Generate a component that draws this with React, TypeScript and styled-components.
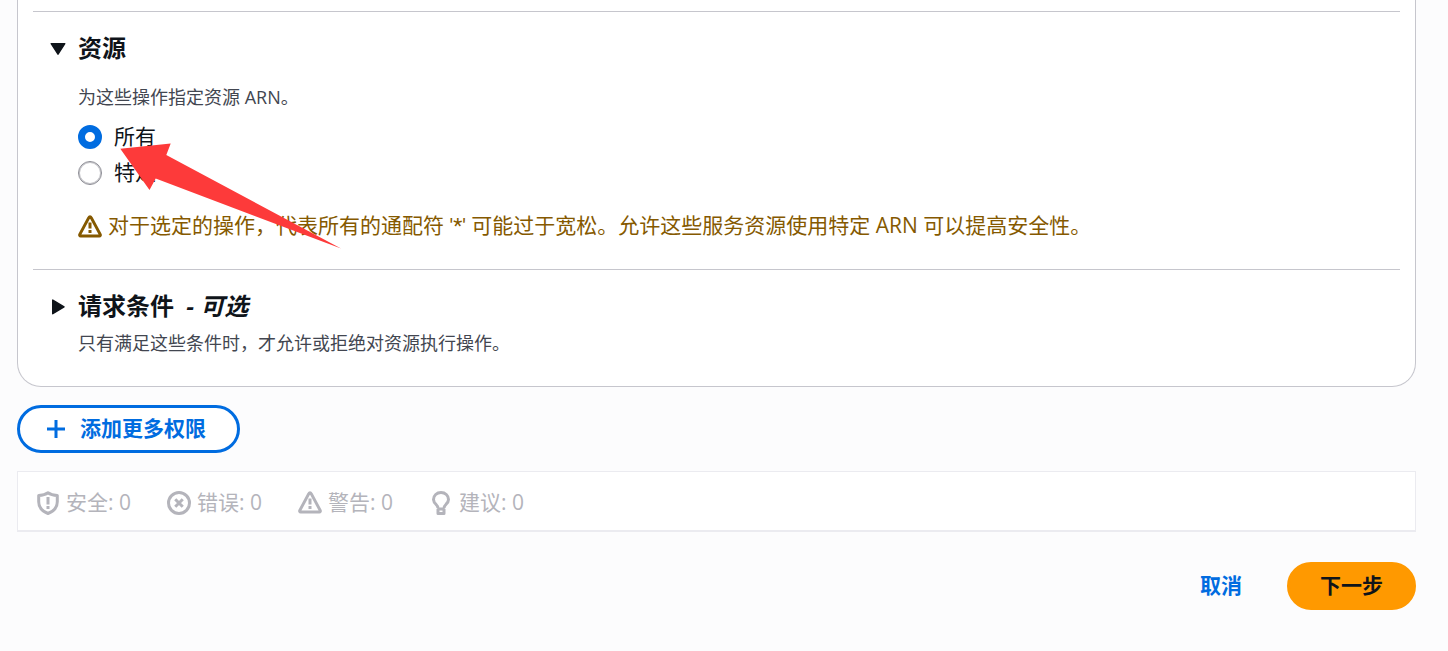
import React, { useState } from "react";
import styled, { createGlobalStyle } from "styled-components";

const GlobalStyle = createGlobalStyle`
  *, *::before, *::after { box-sizing: border-box; }
  html { background: #fcfcfd; }
  body {
    margin: 0;
    color: #0f141a;
    font-family: "Open Sans", "Noto Sans CJK SC", sans-serif;
    font-size: 21px;
    line-height: 30px;
  }
  button, input { font: inherit; margin: 0; }
`;

const Page = styled.main`
  position: relative;
  display: flex;
  flex-direction: column;
  gap: 18px;
  padding: 0 32px 40px 17px;
`;

const Card = styled.section`
  padding: 11px 15px 0;
  background: #ffffff;
  border: 1px solid #c6c6cd;
  border-top: 0;
  border-radius: 0 0 24px 24px;
`;

const Section = styled.div<{ $bottom: number }>`
  padding: 21px 13px ${(p) => p.$bottom}px;
  border-top: 1px solid #c6c6cd;
`;

const SectionToggle = styled.button`
  display: flex;
  align-items: center;
  gap: 8px;
  padding: 0;
  border: 0;
  background: none;
  color: inherit;
  cursor: pointer;
`;

const Heading = styled.span`
  font-size: 24px;
  line-height: 30px;
  font-weight: 700;

  em { margin-left: 6px; }
`;

const SectionBody = styled.div`
  padding-left: 32px;
`;

const Description = styled.p<{ $top: number }>`
  margin: ${(p) => p.$top}px 0 0;
  color: #424650;
  font-size: 18px;
  line-height: 24px;
`;

const RadioGroup = styled.fieldset`
  display: flex;
  flex-direction: column;
  gap: 6px;
  margin: 13px 0 0;
  padding: 0;
  border: 0;
`;

const RadioLabel = styled.label`
  display: flex;
  align-items: center;
  gap: 12px;
  align-self: flex-start;
`;

const RowText = styled.span`
  display: block;
  padding-bottom: 2px;
  line-height: 28px;
`;

const Wildcard = styled.span`
  font-family: Roboto, "Liberation Sans", sans-serif;
`;

const Radio = styled.input`
  appearance: none;
  width: 24px;
  height: 24px;
  border: 1px solid #8c8c94;
  border-radius: 50%;
  background: #ffffff;
  box-shadow: inset 0 0 0 1px #c6c6ca;

  &:checked {
    border: 7px solid #006ce0;
    box-shadow: none;
  }
`;

const Warning = styled.p`
  display: flex;
  align-items: center;
  gap: 6px;
  margin: 23px 0 0;
  color: #855900;
`;

const Button = styled.button<{ $variant: "outline" | "link" | "primary" }>`
  display: inline-flex;
  align-items: center;
  gap: 12px;
  height: 48px;
  padding: ${(p) => (p.$variant === "outline" ? "0 31px 0 24px" : "0 30px")};
  border: 3px solid
    ${(p) => ({ outline: "#006ce0", link: "transparent", primary: "#ff9900" })[p.$variant]};
  border-radius: 24px;
  background: ${(p) => ({ outline: "#ffffff", link: "transparent", primary: "#ff9900" })[p.$variant]};
  color: ${(p) => (p.$variant === "primary" ? "#0f141a" : "#006ce0")};
  font-weight: 700;
  cursor: pointer;
`;

const AddRow = styled.div`
  display: flex;
`;

const StatusBar = styled.ul`
  display: flex;
  gap: 36px;
  margin: 0;
  padding: 16px 18px 12px;
  list-style: none;
  background: #ffffff;
  border: 1px solid #ebebf0;
  border-bottom-width: 2px;
  color: #b4b4bb;
`;

const StatusItem = styled.li`
  display: flex;
  align-items: center;
  gap: 6px;
`;

const Footer = styled.footer`
  display: flex;
  justify-content: flex-end;
  gap: 12px;
  padding-top: 12px;
`;

const Glyph = styled.svg`
  flex: none;
  width: 24px;
  height: 24px;
  fill: none;
  stroke: currentColor;
  stroke-width: 2;
  stroke-linejoin: round;
`;

const Arrow = styled.svg`
  position: absolute;
  left: 120px;
  top: 143px;
  width: 222px;
  height: 106px;
  pointer-events: none;
`;

const Caret = ({ open }: { open: boolean }) => (
  <Glyph viewBox="0 0 16 16" aria-hidden="true">
    <path
      fill="currentColor"
      strokeWidth="1"
      d={open ? "M3.5 5.1h9L8 12.1z" : "M4.5 4.1v9L12 8.6z"}
    />
  </Glyph>
);

const WarningIcon = () => (
  <Glyph viewBox="0 0 16 16" aria-hidden="true">
    <path d="M7.3 1.6 1.2 12.9c-.3.6 0 1.1.6 1.1h12.4c.6 0 .9-.5.6-1.1L8.7 1.6c-.3-.6-1.1-.6-1.4 0z" />
    <path d="M8 5v4M8 10v2" />
  </Glyph>
);

const ShieldIcon = () => (
  <Glyph viewBox="0 0 16 16" aria-hidden="true">
    <path d="M8 1.2C6.5 2.3 4.2 2.9 1.8 3v4.2C1.8 10.8 4 13.5 8 15c4-1.5 6.2-4.2 6.2-7.8V3C11.8 2.9 9.5 2.3 8 1.2z" />
    <path d="M8 4v5M8 10v2" />
  </Glyph>
);

const ErrorIcon = () => (
  <Glyph viewBox="0 0 16 16" aria-hidden="true">
    <circle cx="8" cy="8" r="7" />
    <path d="m5.5 5.5 5 5M10.5 5.5l-5 5" />
  </Glyph>
);

const BulbIcon = () => (
  <Glyph viewBox="0 0 16 16" aria-hidden="true">
    <path d="M6 11.5c0-1.3-.6-1.9-1.4-2.7A4.8 4.8 0 0 1 3 5.7C3 3 5.2 1 8 1s5 2 5 4.7c0 1.3-.6 2.2-1.6 3.1-.8.8-1.4 1.4-1.4 2.7M5.5 12h5M6 12v3h4v-3" />
  </Glyph>
);

const PlusIcon = () => (
  <Glyph viewBox="0 0 16 16" aria-hidden="true">
    <path d="M8 2v12M2 8h12" />
  </Glyph>
);

const scopes = [
  { value: "all", label: "所有" },
  { value: "specific", label: "特定" },
];

const statuses = [
  { label: "安全", Icon: ShieldIcon },
  { label: "错误", Icon: ErrorIcon },
  { label: "警告", Icon: WarningIcon },
  { label: "建议", Icon: BulbIcon },
];

export default function App() {
  const [scope, setScope] = useState("all");

  return (
    <>
      <GlobalStyle />
      <Page>
        <Card>
          <Section $bottom={27}>
            <SectionToggle type="button" aria-expanded="true">
              <Caret open />
              <Heading>资源</Heading>
            </SectionToggle>
            <SectionBody>
              <Description $top={22}>为这些操作指定资源 ARN。</Description>
              <RadioGroup aria-label="资源">
                {scopes.map(({ value, label }) => (
                  <RadioLabel key={value}>
                    <Radio
                      type="radio"
                      name="scope"
                      checked={scope === value}
                      onChange={() => setScope(value)}
                    />
                    <RowText>{label}</RowText>
                  </RadioLabel>
                ))}
              </RadioGroup>
              <Warning>
                <WarningIcon />
                <RowText>
                  对于选定的操作，代表所有的通配符 <Wildcard>'*'</Wildcard>{" "}
                  可能过于宽松。允许这些服务资源使用特定 ARN 可以提高安全性。
                </RowText>
              </Warning>
            </SectionBody>
          </Section>
          <Section $bottom={31}>
            <SectionToggle type="button" aria-expanded="false">
              <Caret open={false} />
              <Heading>
                请求条件 <em>- 可选</em>
              </Heading>
            </SectionToggle>
            <SectionBody>
              <Description $top={10}>只有满足这些条件时，才允许或拒绝对资源执行操作。</Description>
            </SectionBody>
          </Section>
        </Card>
        <AddRow>
          <Button type="button" $variant="outline">
            <PlusIcon />
            <RowText>添加更多权限</RowText>
          </Button>
        </AddRow>
        <StatusBar>
          {statuses.map(({ label, Icon }) => (
            <StatusItem key={label}>
              <Icon />
              <RowText>{label}: 0</RowText>
            </StatusItem>
          ))}
        </StatusBar>
        <Footer>
          <Button type="button" $variant="link">
            <RowText>取消</RowText>
          </Button>
          <Button type="button" $variant="primary">
            <RowText>下一步</RowText>
          </Button>
        </Footer>
        <Arrow viewBox="0 0 222 106" aria-hidden="true">
          <path fill="#fd3a3a" d="M.3 5.7 50.7.5 46.3 12 221 105.5 35.7 35.5 29.5 47z" />
        </Arrow>
      </Page>
    </>
  );
}
